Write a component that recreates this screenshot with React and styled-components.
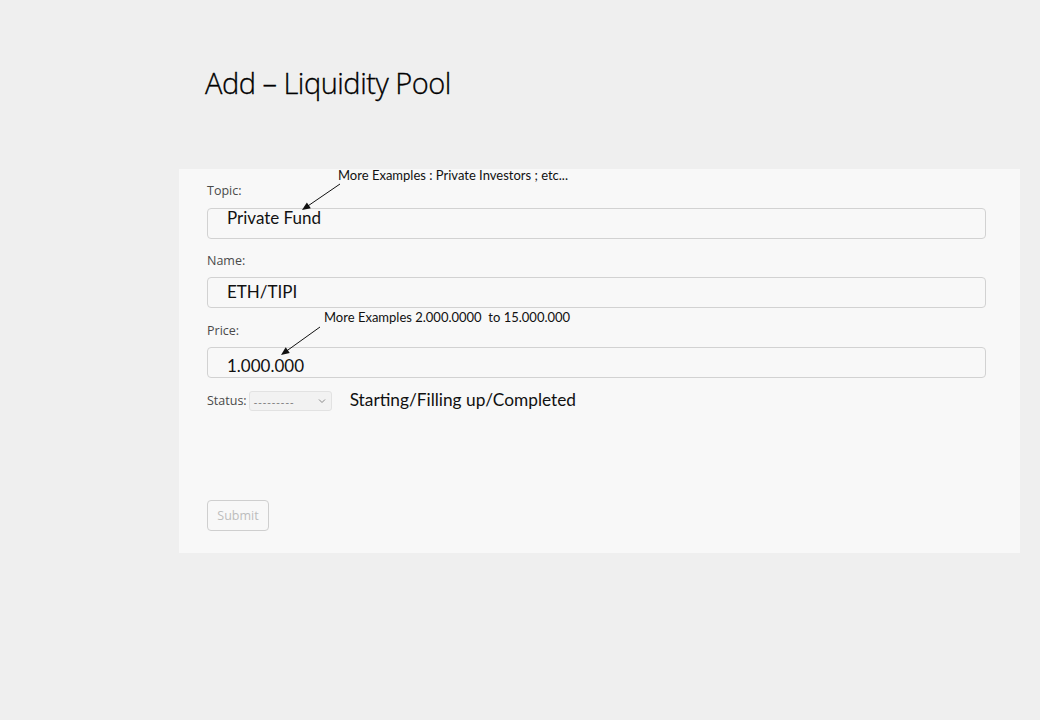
import React from "react";
import styled, { createGlobalStyle } from "styled-components";

const GlobalStyle = createGlobalStyle`
  body {
    margin: 0;
    background: #efefef;
    font-family: "Open Sans", "Noto Sans", sans-serif;
  }
`;

const Page = styled.div`
  width: 1040px;
  height: 720px;
  display: flex;
  flex-direction: column;
`;

const Title = styled.h1`
  margin: 63px 0 0 205px;
  font-family: "Open Sans", sans-serif;
  font-weight: 300;
  font-size: 29px;
  line-height: 40px;
  letter-spacing: -0.5px;
  color: #000;
  -webkit-text-stroke: 0.3px #000;
`;

const Panel = styled.div`
  position: relative;
  margin: 66px 0 0 179px;
  width: 841px;
  box-sizing: border-box;
  padding: 14px 34px 22px 28px;
  background: #f8f8f8;
`;

const Label = styled.div`
  font-size: 12.5px;
  line-height: 16px;
  color: #4a4a4a;
  margin-top: ${(p) => p.$top || 0}px;
`;

const Field = styled.div`
  margin-top: ${(p) => p.$gap}px;
  height: 31px;
  box-sizing: border-box;
  border: 1px solid #d2d2d2;
  border-radius: 4px;
  padding-left: 19px;
  display: flex;
  align-items: center;
  font-family: Lato, sans-serif;
  font-size: 17px;
  color: #111;
  span {
    position: relative;
    top: ${(p) => p.$shift || 0}px;
  }
`;

const StatusRow = styled.div`
  margin-top: 13px;
  display: flex;
  align-items: center;
  height: 20px;
`;

const Select = styled.div`
  margin-left: 2px;
  width: 83px;
  height: 20px;
  box-sizing: border-box;
  border: 1px solid #e2e2e2;
  border-radius: 3px;
  background: #f2f2f2;
  display: flex;
  align-items: center;
  justify-content: space-between;
  padding: 0 5px 0 4px;
  font-size: 11px;
  letter-spacing: 1px;
  color: #777;
`;

const Hint = styled.span`
  margin-left: 18px;
  margin-bottom: 3px;
  font-family: Lato, sans-serif;
  font-size: 17.3px;
  color: #111;
`;

const Submit = styled.button`
  margin-top: 89px;
  width: 62px;
  height: 31px;
  border: 1px solid #cfcfcf;
  border-radius: 4px;
  background: transparent;
  font-family: "Open Sans", sans-serif;
  font-size: 12.5px;
  color: #bdbdbd;
  padding: 0;
`;

const Note = styled.div`
  position: absolute;
  left: ${(p) => p.$x}px;
  top: ${(p) => p.$y}px;
  font-family: Lato, sans-serif;
  font-size: 13px;
  line-height: 16px;
  color: #111;
  white-space: pre;
`;

const Arrows = styled.svg`
  position: absolute;
  left: 0;
  top: 0;
  width: 300px;
  height: 220px;
  pointer-events: none;
`;

function Arrow({ x1, y1, x2, y2 }) {
  const a = Math.atan2(y2 - y1, x2 - x1);
  const l = 9;
  const w = 0.4;
  const p1 = [x2 - l * Math.cos(a - w), y2 - l * Math.sin(a - w)];
  const p2 = [x2 - l * Math.cos(a + w), y2 - l * Math.sin(a + w)];
  return (
    <g>
      <line x1={x1} y1={y1} x2={x2 - 3 * Math.cos(a)} y2={y2 - 3 * Math.sin(a)} stroke="#111" strokeWidth="1" />
      <polygon points={`${x2},${y2} ${p1[0]},${p1[1]} ${p2[0]},${p2[1]}`} fill="#111" />
    </g>
  );
}

export default function App() {
  return (
    <Page>
      <GlobalStyle />
      <Title>Add – Liquidity Pool</Title>
      <Panel>
        <Label>Topic:</Label>
        <Field $gap={9} $shift={-6}><span>Private Fund</span></Field>
        <Label $top={14}>Name:</Label>
        <Field $gap={8} $shift={-1}><span>ETH/TIPI</span></Field>
        <Label $top={15}>Price:</Label>
        <Field $gap={8} $shift={3}><span>1.000.000</span></Field>
        <StatusRow>
          <Label>Status:</Label>
          <Select>
            <span>---------</span>
            <svg width="8" height="6" viewBox="0 0 8 6">
              <path d="M1 1.5 L4 4.5 L7 1.5" fill="none" stroke="#888" strokeWidth="1" />
            </svg>
          </Select>
          <Hint>Starting/Filling up/Completed</Hint>
        </StatusRow>
        <Submit>Submit</Submit>

        <Note $x={159} $y={-2}>More Examples : Private Investors ; etc...</Note>
        <Note $x={145} $y={140}>More Examples 2.000.0000  to 15.000.000</Note>
        <Arrows viewBox="0 0 300 220">
          <Arrow x1={161} y1={15} x2={123} y2={41} />
          <Arrow x1={141} y1={158} x2={102} y2={186} />
        </Arrows>
      </Panel>
    </Page>
  );
}
